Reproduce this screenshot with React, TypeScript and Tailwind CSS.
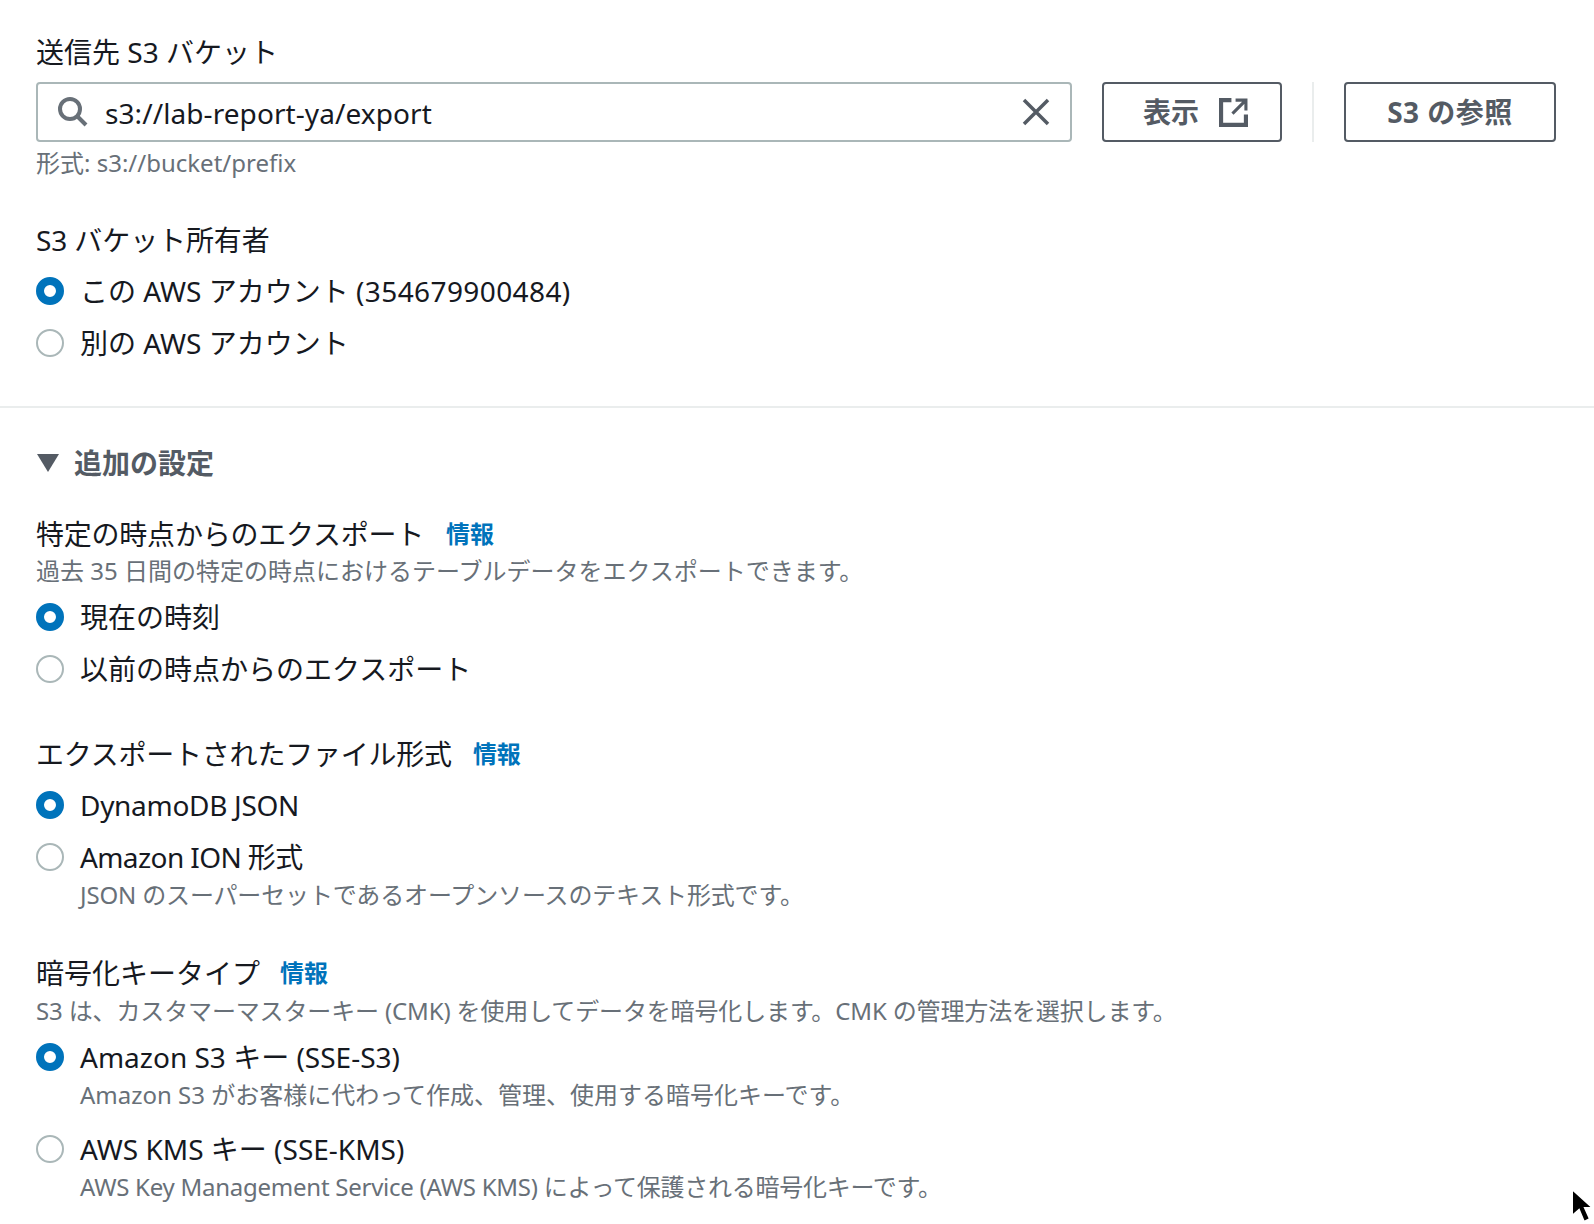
import React from "react";

function Radio({ checked, label, className }: { checked?: boolean; label: React.ReactNode; className?: string }) {
  return (
    <div className={`flex h-[52px] items-center ${className ?? ""}`}>
      {checked ? (
        <span className="h-[28px] w-[28px] rounded-full border-[8px] border-[#0073bb] bg-white" />
      ) : (
        <span className="h-[28px] w-[28px] rounded-full border-2 border-[#aab7b8] bg-white" />
      )}
      <span className="ml-[16px] text-[28px] leading-[44px] text-[#16191f]">{label}</span>
    </div>
  );
}

function Label({ text, info, textClass, infoGap }: { text: string; info?: boolean; textClass?: string; infoGap?: string }) {
  return (
    <div className="flex h-[44px] items-center text-[28px] text-[#16191f]">
      <span className={textClass}>{text}</span>
      {info && <a className={`${infoGap} text-[24px] font-bold text-[#0073bb]`}>情報</a>}
    </div>
  );
}

function Desc({ text, className }: { text: string; className?: string }) {
  return <div className={`h-[36px] text-[24px] leading-[36px] text-[#687078] ${className ?? ""}`}>{text}</div>;
}

export default function App() {
  return (
    <div className="relative h-[1224px] w-[1594px] overflow-hidden bg-white font-['Noto_Sans','Noto_Sans_CJK_JP',sans-serif]">
      <div className="pt-[30px]">
        <div className="px-[36px]">
          <Label text="送信先 S3 バケット" />
          <div className="mt-[8px] flex items-stretch">
            <div className="flex h-[60px] w-[1036px] items-center rounded-[4px] border-2 border-[#aab7b8] pl-[19px] pr-[20px]">
              <svg width="32" height="32" viewBox="0 0 32 32" fill="none" stroke="#687078" strokeWidth="4">
                <circle cx="13" cy="13" r="10" />
                <path d="M20 20l9 9" />
              </svg>
              <span className="ml-[16px] flex-1 pt-[2px] text-[28px] tracking-[0.08px] text-[#16191f]">s3://lab-report-ya/export</span>
              <svg width="28" height="28" viewBox="0 0 28 28" fill="none" stroke="#545b64" strokeWidth="3.5">
                <path d="M2 2l24 24M26 2L2 26" />
              </svg>
            </div>
            <button className="ml-[30px] flex h-[60px] w-[180px] items-center justify-center rounded-[4px] border-2 border-[#545b64] pl-[7px] text-[28px] font-bold text-[#545b64]">
              表示
              <svg className="ml-[20px]" width="29" height="29" viewBox="0 0 28 28" fill="none" stroke="#545b64" strokeWidth="4">
                <path d="M12 2H2v24h24V16" />
                <path d="M13 15L25 3M16 2h10v10" strokeWidth="3" />
              </svg>
            </button>
            <div className="ml-[30px] h-[60px] w-[2px] bg-[#eaeded]" />
            <button className="ml-[30px] h-[60px] w-[212px] rounded-[4px] border-2 border-[#545b64] text-[28px] font-bold tracking-[0.5px] text-[#545b64]">
              S3 の参照
            </button>
          </div>
          <Desc text="形式: s3://bucket/prefix" className="mt-[3px]" />
          <div className="mt-[37px]">
            <Label text="S3 バケット所有者" textClass="tracking-[-0.1px]" />
          </div>
          <Radio
            checked
            className="mt-[3px]"
            label={
              <>
                この AWS アカウント <span className="tracking-[0.4px]">(354679900484)</span>
              </>
            }
          />
          <Radio label="別の AWS アカウント" />
        </div>

        <div className="mt-[37px] h-[2px] bg-[#eaeded]" />

        <div className="px-[36px]">
          <div className="mt-[33px] flex h-[44px] items-center pl-[1px]">
            <svg width="22" height="18" viewBox="0 0 22 18">
              <path d="M0 0h22L11 18z" fill="#545b64" />
            </svg>
            <span className="ml-[15px] text-[28px] font-bold text-[#545b64]">追加の設定</span>
          </div>

          <div className="mt-[27px]">
            <Label text="特定の時点からのエクスポート" textClass="tracking-[-0.22px]" info infoGap="ml-[22px]" />
          </div>
          <Desc text="過去 35 日間の特定の時点におけるテーブルデータをエクスポートできます。" className="-mt-[3px]" />
          <Radio checked label="現在の時刻" className="mt-[2px]" />
          <Radio label="以前の時点からのエクスポート" />

          <div className="mt-[37px]">
            <Label text="エクスポートされたファイル形式" textClass="tracking-[-0.22px]" info infoGap="ml-[21px]" />
          </div>
          <div className="mt-[3px]">
            <Radio checked label={<span className="tracking-[-0.3px]">DynamoDB JSON</span>} />
            <Radio label={<span className="tracking-[-0.6px]">Amazon ION 形式</span>} />
          </div>
          <Desc text="JSON のスーパーセットであるオープンソースのテキスト形式です。" className="-mt-[6px] pl-[44px] tracking-[-0.15px]" />

          <div className="mt-[38px]">
            <Label text="暗号化キータイプ" info infoGap="ml-[20px]" />
          </div>
          <Desc text="S3 は、カスタマーマスターキー (CMK) を使用してデータを暗号化します。CMK の管理方法を選択します。" className="-mt-[2px] tracking-[-0.14px]" />
          <Radio checked label="Amazon S3 キー (SSE-S3)" className="mt-[2px]" />
          <Desc text="Amazon S3 がお客様に代わって作成、管理、使用する暗号化キーです。" className="-mt-[6px] pl-[44px]" />
          <div className="mt-[10px]">
            <Radio label="AWS KMS キー (SSE-KMS)" />
          </div>
          <Desc text="AWS Key Management Service (AWS KMS) によって保護される暗号化キーです。" className="-mt-[6px] pl-[44px] tracking-[-0.25px]" />
        </div>
      </div>

      <svg className="absolute left-[1570px] top-[1187px]" width="24" height="37" viewBox="0 0 24 37">
        <path d="M2 2v27l7-6 5 12 6-3-5-11h8z" fill="#000" stroke="#fff" strokeWidth="2" />
      </svg>
    </div>
  );
}
